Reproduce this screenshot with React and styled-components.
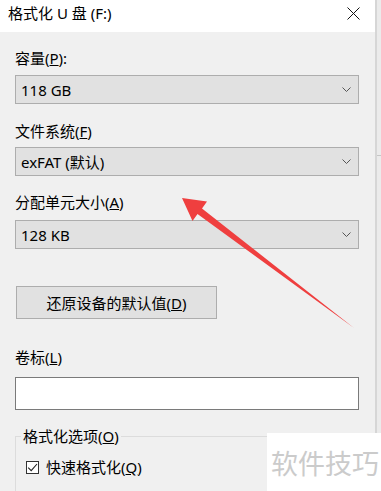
import React from "react";
import styled, { createGlobalStyle } from "styled-components";

const Global = createGlobalStyle`
  html, body { margin: 0; padding: 0; }
  body {
    width: 381px;
    height: 491px;
    overflow: hidden;
    background: #f0f0f0;
    font-family: "Noto Sans", "Noto Sans CJK SC", sans-serif;
    color: #000;
  }
`;

const Page = styled.div`
  position: relative;
  display: flex;
  align-items: flex-start;
  width: 381px;
  height: 491px;
  overflow: hidden;
`;

const Dialog = styled.div`
  width: 375px;
  flex-shrink: 0;
  display: flex;
  flex-direction: column;
  background: #f0f0f0;
`;

const Side = styled.div`
  flex: 1;
  align-self: stretch;
  border-left: 2px solid #d6d6d6;
  background: #ebebeb;
  display: flex;
  flex-direction: column;
`;

const SideLine = styled.div`
  margin-top: 155px;
  height: 1px;
  background: #c6c6c6;
`;

const TitleBar = styled.div`
  flex-shrink: 0;
  height: 32px;
  background: #fff;
  display: flex;
  align-items: flex-start;
  justify-content: space-between;
  padding: 3px 15px 0 8px;
  box-sizing: border-box;
`;

const Title = styled.span`
  font-size: 15px;
  line-height: 20px;
`;

const Close = styled.svg`
  margin-top: 4px;
  display: block;
`;

const Body = styled.div`
  flex-shrink: 0;
  padding: 16px 16px 0 15px;
  display: flex;
  flex-direction: column;
`;

const Label = styled.div`
  flex-shrink: 0;
  font-size: 15px;
  line-height: 20px;
  margin-top: ${(p) => p.$mt || 0}px;
`;

const Combo = styled.div`
  flex-shrink: 0;
  margin-top: ${(p) => p.$mt || 7}px;
  height: 29px;
  box-sizing: border-box;
  border: 1px solid #adadad;
  background: #e1e1e1;
  display: flex;
  align-items: center;
  justify-content: space-between;
  padding: 0 7px 0 5px;
  font-size: 15px;
`;

const Button = styled.div`
  flex-shrink: 0;
  margin-top: 37px;
  margin-left: 1px;
  width: 201px;
  height: 33px;
  box-sizing: border-box;
  border: 1px solid #adadad;
  background: #e1e1e1;
  display: flex;
  align-items: center;
  justify-content: center;
  font-size: 15px;
`;

const TextInput = styled.div`
  flex-shrink: 0;
  margin-top: 10px;
  height: 33px;
  box-sizing: border-box;
  border: 1px solid #7a7a7a;
  background: #fff;
`;

const Group = styled.fieldset`
  flex-shrink: 0;
  margin: 16px 0 0 0;
  padding: 11px 10px 20px 10px;
  border: 1px solid #dcdcdc;
  min-width: 0;
`;

const Legend = styled.legend`
  margin-left: -5px;
  padding: 0 2px;
  font-size: 15px;
  line-height: 20px;
`;

const CheckRow = styled.label`
  display: flex;
  align-items: center;
  gap: 7px;
  font-size: 15px;
  line-height: 20px;
`;

const Box = styled.span`
  width: 13px;
  height: 13px;
  box-sizing: border-box;
  border: 1px solid #333;
  background: #fff;
  display: flex;
  align-items: center;
  justify-content: center;
`;

const ArrowLayer = styled.svg`
  position: absolute;
  left: 0;
  top: 0;
  pointer-events: none;
`;

const Watermark = styled.div`
  position: absolute;
  left: 267px;
  top: 433px;
  right: 0;
  bottom: 0;
  background: #fff;
  color: #cbcbcb;
  font-family: "Noto Sans CJK SC", sans-serif;
  font-size: 27px;
  line-height: 36px;
  padding: 12px 0 0 4px;
`;

const Chevron = () => (
  <svg width="9" height="5" viewBox="0 0 9 5">
    <path d="M0.5 0.5 L4.5 4.5 L8.5 0.5" fill="none" stroke="#555" strokeWidth="1" />
  </svg>
);

const Field = ({ label, value, mt, cmt }) => (
  <>
    <Label $mt={mt}>{label}</Label>
    <Combo $mt={cmt}>
      <span>{value}</span>
      <Chevron />
    </Combo>
  </>
);

export default function App() {
  return (
    <Page>
      <Global />
      <Dialog>
        <TitleBar>
          <Title>格式化 U 盘 (F:)</Title>
          <Close width="13" height="13" viewBox="0 0 13 13">
            <path d="M0.5 0.5 L12.5 12.5 M12.5 0.5 L0.5 12.5" stroke="#111" strokeWidth="1" />
          </Close>
        </TitleBar>
        <Body>
          <Field label={<>容量(<u>P</u>):</>} value="118 GB" cmt={7} />
          <Field label={<>文件系统(<u>F</u>)</>} value="exFAT (默认)" mt={17} cmt={6} />
          <Field label={<>分配单元大小(<u>A</u>)</>} value="128 KB" mt={16} cmt={8} />
          <Button>
            <span>
              还原设备的默认值(<u>D</u>)
            </span>
          </Button>
          <Label $mt={28}>
            卷标(<u>L</u>)
          </Label>
          <TextInput />
          <Group>
            <Legend>
              格式化选项(<u>O</u>)
            </Legend>
            <CheckRow>
              <Box>
                <svg width="11" height="11" viewBox="0 0 11 11">
                  <path d="M1.2 5.6 L4.2 8.6 L10 2" fill="none" stroke="#222" strokeWidth="1.1" />
                </svg>
              </Box>
              <span>
                快速格式化(<u>Q</u>)
              </span>
            </CheckRow>
          </Group>
        </Body>
      </Dialog>
      <Side>
        <SideLine />
      </Side>
      <ArrowLayer width="381" height="491" viewBox="0 0 381 491">
        <polygon
          points="182,198 207,201.5 202,208.5 354,328 197.5,214 192.5,221"
          fill="#ef3f3f"
        />
      </ArrowLayer>
      <Watermark>软件技巧</Watermark>
    </Page>
  );
}
